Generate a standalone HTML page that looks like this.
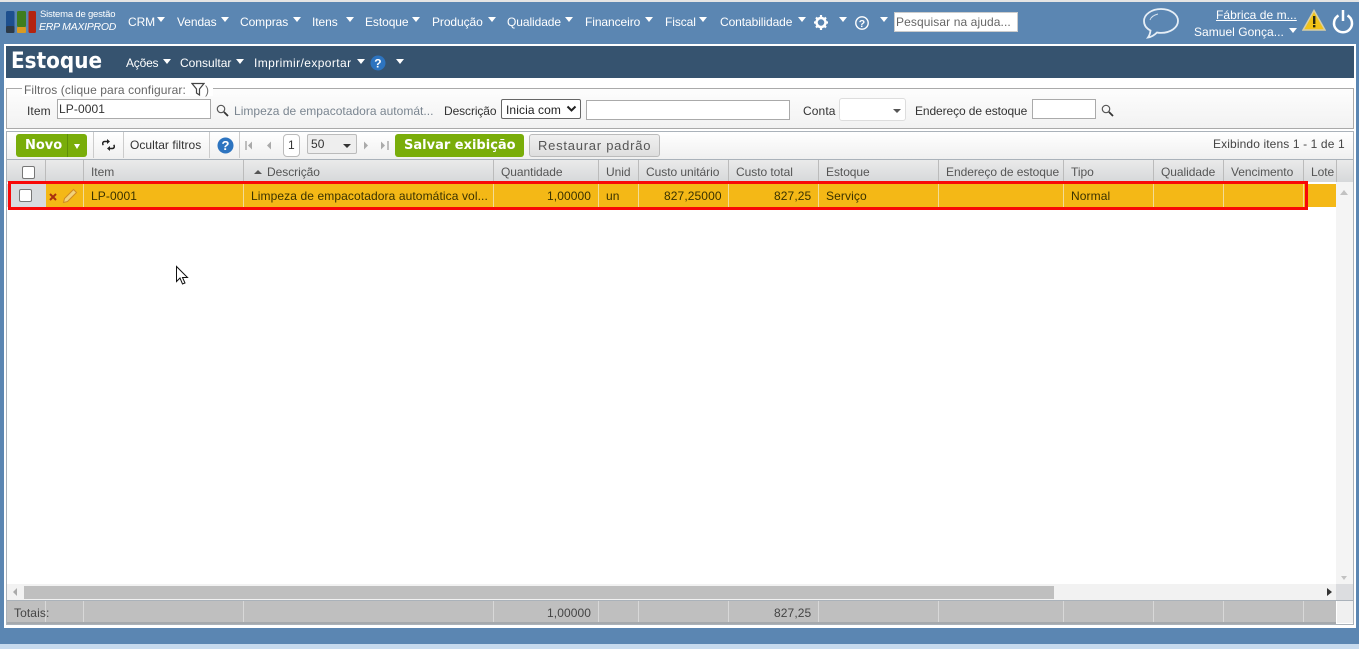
<!DOCTYPE html>
<html lang="pt"><head><meta charset="utf-8"><title>Estoque</title>
<style>
html,body{margin:0;padding:0}
body{width:1359px;height:649px;position:relative;overflow:hidden;background:#5b86b2;font:12px "Liberation Sans",sans-serif;letter-spacing:.1px;color:#333}
.a,.t,.m,.s,.hd,.cd{position:absolute}
.t,.m,.s,.hd,.cd{white-space:nowrap}
.m{color:#fff;top:15px;line-height:14px;font-size:12px;letter-spacing:-.08px}
.s{color:#fff;top:56px;line-height:14px}
.tri{position:absolute;width:0;height:0;border-left:4.5px solid transparent;border-right:4.5px solid transparent;border-top:5px solid #fff}
.hd{top:165px;line-height:14px;color:#555;letter-spacing:-.05px}
.cd{top:189px;line-height:14px;color:#3a3200;letter-spacing:.1px}
.v{position:absolute;width:1px}
.ib{position:absolute;background:#fff;border:1px solid #aaa;box-sizing:border-box}
.cb{position:absolute;width:13px;height:13px;box-sizing:border-box;border:1px solid #777;border-radius:2px;background:#fff}
</style></head><body>
<div class="a" style="left:0;top:0;width:1359px;height:2px;background:#e4e4e4"></div>
<div class="a" style="left:0;top:644px;width:1359px;height:5px;background:#c6daee"></div>

<!-- Logo -->
<svg class="a" style="left:5px;top:10px" width="31" height="24" viewBox="0 0 31 24"><rect x="1" y="1" width="8.500" height="22" rx="1.500" fill="#1d4f8e"/><rect x="1" y="16" width="8.500" height="7" rx="1.500" fill="#2c3a48"/><rect x="12" y="1" width="9" height="16" rx="1.500" fill="#3f7d1e"/><rect x="12" y="17" width="9" height="6" rx="1" fill="#d99a22"/><rect x="23.500" y="1" width="7.500" height="22" rx="1.500" fill="#b3230f"/></svg>
<div class="t" style="left:40px;top:9px;color:#fff;font-size:9.500px;line-height:12px;letter-spacing:-.2px">Sistema de gestão</div>
<div class="t" style="left:39px;top:21px;color:#fff;font-size:10.500px;line-height:13px;font-style:italic;letter-spacing:-.25px">ERP MAXIPROD</div>

<!-- Menu -->
<div class="m" style="left:128px">CRM</div><i class="tri" style="left:157px;top:17px"></i>
<div class="m" style="left:177px">Vendas</div><i class="tri" style="left:221px;top:17px"></i>
<div class="m" style="left:240px">Compras</div><i class="tri" style="left:293px;top:17px"></i>
<div class="m" style="left:312px">Itens</div><i class="tri" style="left:346px;top:17px"></i>
<div class="m" style="left:365px">Estoque</div><i class="tri" style="left:412px;top:17px"></i>
<div class="m" style="left:432px">Produção</div><i class="tri" style="left:488px;top:17px"></i>
<div class="m" style="left:507px">Qualidade</div><i class="tri" style="left:565px;top:17px"></i>
<div class="m" style="left:585px">Financeiro</div><i class="tri" style="left:645px;top:17px"></i>
<div class="m" style="left:665px">Fiscal</div><i class="tri" style="left:699px;top:17px"></i>
<div class="m" style="left:720px">Contabilidade</div><i class="tri" style="left:798px;top:17px"></i>
<svg class="a" style="left:813px;top:14px" width="16" height="17" viewBox="0 0 16 17"><circle cx="8" cy="8.500" r="4.500" fill="none" stroke="#fff" stroke-width="2.500"/><path d="M8 1v3M8 13v3M1 8.500h3M12 8.500h3M3 3.500l2 2M11 11.500l2 2M13 3.500l-2 2M5 11.500l-2 2" stroke="#fff" stroke-width="2.200"/></svg>
<i class="tri" style="left:839px;top:17px"></i>
<svg class="a" style="left:854px;top:15px" width="16" height="16" viewBox="0 0 16 16"><circle cx="8" cy="8" r="6.200" fill="none" stroke="#fff" stroke-width="1.400"/><text x="8" y="12" font-size="10.500" font-weight="bold" fill="#fff" text-anchor="middle" font-family="Liberation Sans">?</text></svg>
<i class="tri" style="left:880px;top:17px"></i>
<div class="a" style="left:894px;top:12px;width:124px;height:20px;background:#fff;border:1px solid #ccc;box-sizing:border-box"></div>
<div class="t" style="left:896px;top:15px;color:#666;line-height:14px">Pesquisar na ajuda...</div>

<svg class="a" style="left:1142px;top:7px" width="38" height="33" viewBox="0 0 38 33"><path d="M19 2C9.500 2 2 7.500 2 14c0 4 2.500 7.500 6.500 9.500-.3 2.500-1 5-2.500 7 3.500-.5 6.500-2.500 9-5 1.300.3 2.600.4 4 .4 9.500 0 17-5.400 17-12S28.500 2 19 2z" fill="none" stroke="#e6eef6" stroke-width="1.800"/><path d="M8 13c1-3 4-5 8-6" fill="none" stroke="#d5e2ee" stroke-width="1"/></svg>
<div class="t" style="left:1216px;top:8px;color:#fff;line-height:14px;text-decoration:underline;letter-spacing:.05px">Fábrica de m...</div>
<div class="t" style="left:1194px;top:25px;color:#fff;line-height:14px;letter-spacing:.03px">Samuel Gonça...</div><i class="tri" style="left:1289px;top:28px"></i>
<svg class="a" style="left:1302px;top:9px" width="24" height="22" viewBox="0 0 24 22"><path d="M12 1.500L23 21H1z" fill="#f2c418" stroke="#d8cfa8" stroke-width="1.500"/><rect x="11" y="7" width="2.400" height="8" fill="#2a2a10"/><rect x="11" y="16" width="2.400" height="2.400" fill="#2a2a10"/></svg>
<svg class="a" style="left:1331px;top:8px" width="24" height="26" viewBox="0 0 24 26"><path d="M7.500 7.500a9 9 0 1 0 9 0" fill="none" stroke="#fff" stroke-width="2.500"/><path d="M12 2v11" stroke="#fff" stroke-width="2.500"/></svg>

<!-- Panel -->
<div class="a" style="left:4px;top:44px;width:1352px;height:584px;background:#fff"></div>
<div class="a" style="left:6px;top:46px;width:1348px;height:32px;background:#36536f"></div>
<div class="t" style="left:11px;top:49px;color:#fff;font-size:22px;line-height:26px;font-weight:bold;letter-spacing:0;font-family:'DejaVu Sans',sans-serif;transform:scaleX(.91);transform-origin:left">Estoque</div>
<div class="s" style="left:126px;letter-spacing:-.2px">Ações</div><i class="tri" style="left:163px;top:59px"></i>
<div class="s" style="left:180px;letter-spacing:0">Consultar</div><i class="tri" style="left:236px;top:59px"></i>
<div class="s" style="left:254px;letter-spacing:.4px">Imprimir/exportar</div><i class="tri" style="left:357px;top:59px"></i>
<svg class="a" style="left:370px;top:55px" width="16" height="16" viewBox="0 0 16 16"><circle cx="8" cy="8" r="7.500" fill="#2d74c0"/><text x="8" y="12.500" font-size="12" font-weight="bold" fill="#fff" text-anchor="middle" font-family="Liberation Sans">?</text></svg>
<i class="tri" style="left:396px;top:59px"></i>

<!-- Filters -->
<div class="a" style="left:6px;top:88px;width:1348px;height:41px;box-sizing:border-box;border:1px solid #aaa;background:linear-gradient(#fdfdfd,#f2f2f2)"></div>
<div class="a" style="left:22px;top:82px;width:191px;height:14px;background:#fff"></div>
<div class="t" style="left:24px;top:83px;color:#666;line-height:14px">Filtros (clique para configurar:</div>
<svg class="a" style="left:191px;top:82px" width="14" height="14" viewBox="0 0 14 14"><path d="M1 1.500h12L8.500 7v6L5.500 11V7z" fill="none" stroke="#444" stroke-width="1.200"/></svg>
<div class="t" style="left:205px;top:83px;color:#666;line-height:14px">)</div>
<div class="t" style="left:27px;top:104px;line-height:14px">Item</div>
<div class="ib" style="left:57px;top:99px;width:154px;height:20px"></div>
<div class="t" style="left:59px;top:102px;line-height:14px">LP-0001</div>
<svg class="a" style="left:216px;top:104px" width="13" height="13" viewBox="0 0 13 13"><circle cx="5" cy="5" r="3.700" fill="none" stroke="#555" stroke-width="1.200"/><path d="M8 8l4 4" stroke="#333" stroke-width="1.800"/></svg>
<div class="t" style="left:234px;top:104px;color:#7a8590;line-height:14px;letter-spacing:.02px">Limpeza de empacotadora automát...</div>
<div class="t" style="left:444px;top:104px;line-height:14px;letter-spacing:-.1px">Descrição</div>
<div class="a" style="left:501px;top:99px;width:80px;height:20px;box-sizing:border-box;border:1px solid #666;border-radius:2px;background:#fff"></div>
<div class="t" style="left:506px;top:103px;line-height:14px;color:#222">Inicia com</div>
<svg class="a" style="left:566px;top:105px" width="11" height="8" viewBox="0 0 11 8"><path d="M1.500 1.500l4 4 4-4" fill="none" stroke="#222" stroke-width="2"/></svg>
<div class="ib" style="left:586px;top:100px;width:204px;height:20px"></div>
<div class="t" style="left:803px;top:104px;line-height:14px">Conta</div>
<div class="a" style="left:839px;top:98px;width:67px;height:23px;box-sizing:border-box;border:1px solid #ddd;border-radius:3px;background:#fff"></div>
<div class="a" style="left:893px;top:109px;width:0;height:0;border-left:4px solid transparent;border-right:4px solid transparent;border-top:4px solid #555"></div>
<div class="t" style="left:915px;top:104px;line-height:14px;letter-spacing:-.1px">Endereço de estoque</div>
<div class="ib" style="left:1032px;top:99px;width:64px;height:20px"></div>
<svg class="a" style="left:1101px;top:104px" width="13" height="13" viewBox="0 0 13 13"><circle cx="5" cy="5" r="3.700" fill="none" stroke="#555" stroke-width="1.200"/><path d="M8 8l4 4" stroke="#333" stroke-width="1.800"/></svg>

<!-- Grid frame -->
<div class="a" style="left:6px;top:131px;width:1348px;height:494px;box-sizing:border-box;border:1px solid #aab2ba;background:#fff"></div>
<!-- Toolbar -->
<div class="a" style="left:7px;top:132px;width:1346px;height:27px;background:linear-gradient(#fff,#f0f0f0)"></div>
<div class="a" style="left:16px;top:134px;width:71px;height:23px;border-radius:3px;background:#79ad0a"></div>
<div class="a" style="left:67px;top:134px;width:1px;height:23px;background:#5f8f08"></div>
<div class="t" style="left:25px;top:137px;color:#fff;font-size:13px;font-weight:bold;line-height:17px;font-family:'DejaVu Sans',sans-serif;letter-spacing:0">Novo</div>
<div class="a" style="left:74px;top:144px;width:0;height:0;border-left:3.500px solid transparent;border-right:3.500px solid transparent;border-top:5px solid #fff"></div>
<div class="v" style="left:93px;top:132px;height:26px;background:#ccc"></div>
<div class="v" style="left:123px;top:132px;height:26px;background:#ccc"></div>
<div class="v" style="left:209px;top:132px;height:26px;background:#ccc"></div>
<div class="v" style="left:239px;top:132px;height:26px;background:#ccc"></div>
<svg class="a" style="left:102px;top:139px" width="13" height="12" viewBox="0 0 13 12"><path d="M6 2.500H3a2 2 0 0 0-1.600 3.500M7 9.500h3a2 2 0 0 0 1.600-3.500" fill="none" stroke="#222" stroke-width="1.500"/><path d="M5 0v5l3-2.500zM8 7v5L5 9.500z" fill="#222"/></svg>
<div class="t" style="left:130px;top:138px;line-height:14px;color:#333;letter-spacing:.04px">Ocultar filtros</div>
<svg class="a" style="left:217px;top:137px" width="17" height="17" viewBox="0 0 17 17"><circle cx="8.500" cy="8.500" r="8" fill="#2d74c0"/><text x="8.500" y="13" font-size="13" font-weight="bold" fill="#fff" text-anchor="middle" font-family="Liberation Sans">?</text></svg>
<svg class="a" style="left:245px;top:140px" width="30" height="11" viewBox="0 0 30 11"><path d="M1 1v9" stroke="#aaa" stroke-width="1.500"/><path d="M7 1.500L3 5.500l4 4zM26 1.500l-4 4 4 4z" fill="#aaa"/></svg>
<div class="a" style="left:283px;top:134px;width:17px;height:23px;box-sizing:border-box;border:1px solid #bbb;border-radius:4px;background:#fff"></div>
<div class="t" style="left:288px;top:138px;line-height:14px;letter-spacing:0">1</div>
<div class="a" style="left:307px;top:134px;width:50px;height:20px;box-sizing:border-box;border:1px solid #bbb;border-radius:2px;background:#eee"></div>
<div class="t" style="left:311px;top:137px;line-height:14px">50</div>
<div class="a" style="left:343px;top:144px;width:0;height:0;border-left:4.500px solid transparent;border-right:4.500px solid transparent;border-top:4.500px solid #333"></div>
<svg class="a" style="left:362px;top:140px" width="28" height="11" viewBox="0 0 28 11"><path d="M2 1.500l4 4-4 4zM19 1.500l4 4-4 4z" fill="#aaa"/><path d="M26 1v9" stroke="#aaa" stroke-width="1.500"/></svg>
<div class="a" style="left:395px;top:134px;width:129px;height:23px;border-radius:3px;background:#79ad0a"></div>
<div class="t" style="left:404px;top:137px;color:#fff;font-size:13px;font-weight:bold;line-height:17px;font-family:'DejaVu Sans',sans-serif;letter-spacing:0">Salvar exibição</div>
<div class="a" style="left:529px;top:134px;width:131px;height:23px;box-sizing:border-box;border:1px solid #bbb;border-radius:3px;background:linear-gradient(#f0f0f0,#dedede)"></div>
<div class="t" style="left:538px;top:137px;font-size:13px;line-height:17px;letter-spacing:.75px;color:#555">Restaurar padrão</div>
<div class="t" style="left:1213px;top:137px;line-height:14px;letter-spacing:.12px;color:#444">Exibindo itens 1 - 1 de 1</div>

<!-- Header -->
<div class="a" style="left:7px;top:159px;width:1346px;height:1px;background:#aab2ba"></div>
<div class="a" style="left:7px;top:160px;width:1346px;height:22px;background:linear-gradient(#eaeaea,#d6d8da)"></div>
<div class="cb" style="left:22px;top:166px"></div>
<div class="v" style="left:45px;top:160px;height:22px;background:#bbb"></div>
<div class="v" style="left:83px;top:160px;height:22px;background:#bbb"></div>
<div class="v" style="left:243px;top:160px;height:22px;background:#bbb"></div>
<div class="v" style="left:493px;top:160px;height:22px;background:#bbb"></div>
<div class="v" style="left:598px;top:160px;height:22px;background:#bbb"></div>
<div class="v" style="left:638px;top:160px;height:22px;background:#bbb"></div>
<div class="v" style="left:728px;top:160px;height:22px;background:#bbb"></div>
<div class="v" style="left:818px;top:160px;height:22px;background:#bbb"></div>
<div class="v" style="left:938px;top:160px;height:22px;background:#bbb"></div>
<div class="v" style="left:1063px;top:160px;height:22px;background:#bbb"></div>
<div class="v" style="left:1153px;top:160px;height:22px;background:#bbb"></div>
<div class="v" style="left:1223px;top:160px;height:22px;background:#bbb"></div>
<div class="v" style="left:1303px;top:160px;height:22px;background:#bbb"></div>
<div class="v" style="left:1336px;top:160px;height:22px;background:#bbb"></div>
<div class="hd" style="left:91px">Item</div>
<div class="a" style="left:254px;top:170px;width:0;height:0;border-left:4px solid transparent;border-right:4px solid transparent;border-bottom:4px solid #555"></div>
<div class="hd" style="left:267px">Descrição</div>
<div class="hd" style="left:501px">Quantidade</div>
<div class="hd" style="left:606px">Unid</div>
<div class="hd" style="left:646px">Custo unitário</div>
<div class="hd" style="left:736px">Custo total</div>
<div class="hd" style="left:826px">Estoque</div>
<div class="hd" style="left:946px">Endereço de estoque</div>
<div class="hd" style="left:1071px">Tipo</div>
<div class="hd" style="left:1161px">Qualidade</div>
<div class="hd" style="left:1231px">Vencimento</div>
<div class="hd" style="left:1311px">Lote</div>

<!-- Row -->
<div class="a" style="left:7px;top:184px;width:39px;height:23px;background:#d8dbde"></div>
<div class="a" style="left:46px;top:184px;width:1290px;height:23px;background:#f4b816"></div>
<div class="cb" style="left:19px;top:189px"></div>
<div class="v" style="left:83px;top:184px;height:23px;background:#f3dc95"></div>
<div class="v" style="left:243px;top:184px;height:23px;background:#f3dc95"></div>
<div class="v" style="left:493px;top:184px;height:23px;background:#f3dc95"></div>
<div class="v" style="left:598px;top:184px;height:23px;background:#f3dc95"></div>
<div class="v" style="left:638px;top:184px;height:23px;background:#f3dc95"></div>
<div class="v" style="left:728px;top:184px;height:23px;background:#f3dc95"></div>
<div class="v" style="left:818px;top:184px;height:23px;background:#f3dc95"></div>
<div class="v" style="left:938px;top:184px;height:23px;background:#f3dc95"></div>
<div class="v" style="left:1063px;top:184px;height:23px;background:#f3dc95"></div>
<div class="v" style="left:1153px;top:184px;height:23px;background:#f3dc95"></div>
<div class="v" style="left:1223px;top:184px;height:23px;background:#f3dc95"></div>
<div class="v" style="left:1303px;top:184px;height:23px;background:#f3dc95"></div>
<svg class="a" style="left:49px;top:193px" width="8" height="8" viewBox="0 0 8 8"><path d="M1 1l6 6M7 1L1 7" stroke="#a8300f" stroke-width="2"/></svg>
<svg class="a" style="left:62px;top:188px" width="16" height="16" viewBox="0 0 16 16"><path d="M1.500 14.500l1-4L11.500 1.500l3 3-9 9z" fill="#f2d27a" stroke="#cf8a25" stroke-width="1"/></svg>
<div class="cd" style="left:91px">LP-0001</div>
<div class="cd" style="left:251px">Limpeza de empacotadora automática vol...</div>
<div class="cd" style="left:547px">1,00000</div>
<div class="cd" style="left:606px">un</div>
<div class="cd" style="left:664px">827,25000</div>
<div class="cd" style="left:774px">827,25</div>
<div class="cd" style="left:826px">Serviço</div>
<div class="cd" style="left:1071px">Normal</div>
<!-- Red highlight -->
<div class="a" style="left:8px;top:181px;width:1300px;height:29px;box-sizing:border-box;border:3px solid #f80808"></div>

<!-- Cursor -->
<svg class="a" style="left:175px;top:265px" width="15" height="21" viewBox="0 0 15 21"><path d="M1.500 1.500v15l3.500-3.500 2.500 6 2.500-1-2.500-5.500h5z" fill="#fff" stroke="#111" stroke-width="1"/></svg>

<!-- Vertical scrollbar -->
<div class="a" style="left:1336px;top:182px;width:17px;height:403px;background:#f4f4f4"></div>
<div class="a" style="left:1340px;top:190px;width:0;height:0;border-left:4px solid transparent;border-right:4px solid transparent;border-bottom:5px solid #c2c2c2"></div>
<div class="a" style="left:1341px;top:576px;width:0;height:0;border-left:3.500px solid transparent;border-right:3.500px solid transparent;border-top:4px solid #c2c2c2"></div>

<!-- Horizontal scrollbar -->
<div class="a" style="left:7px;top:584px;width:1329px;height:16px;background:#f2f2f2"></div>
<div class="a" style="left:1336px;top:584px;width:17px;height:16px;background:#dcdde0"></div>
<div class="a" style="left:24px;top:586px;width:1030px;height:13px;background:#bfbfbf"></div>
<div class="a" style="left:13px;top:588px;width:0;height:0;border-top:4px solid transparent;border-bottom:4px solid transparent;border-right:4px solid #aaa"></div>
<div class="a" style="left:1327px;top:588px;width:0;height:0;border-top:4px solid transparent;border-bottom:4px solid transparent;border-left:5px solid #333"></div>

<!-- Totals -->
<div class="a" style="left:7px;top:601px;width:1329px;height:23px;background:#bfbfbf;border-bottom:2px solid #a5a9ad;box-sizing:border-box"></div>
<div class="a" style="left:7px;top:600px;width:1346px;height:1px;background:#aab2ba"></div>
<div class="a" style="left:1337px;top:601px;width:16px;height:22px;background:#f0f0f0"></div>
<div class="v" style="left:45px;top:601px;height:21px;background:#d8d8d8"></div>
<div class="v" style="left:83px;top:601px;height:21px;background:#d8d8d8"></div>
<div class="v" style="left:243px;top:601px;height:21px;background:#d8d8d8"></div>
<div class="v" style="left:493px;top:601px;height:21px;background:#d8d8d8"></div>
<div class="v" style="left:598px;top:601px;height:21px;background:#d8d8d8"></div>
<div class="v" style="left:638px;top:601px;height:21px;background:#d8d8d8"></div>
<div class="v" style="left:728px;top:601px;height:21px;background:#d8d8d8"></div>
<div class="v" style="left:818px;top:601px;height:21px;background:#d8d8d8"></div>
<div class="v" style="left:938px;top:601px;height:21px;background:#d8d8d8"></div>
<div class="v" style="left:1063px;top:601px;height:21px;background:#d8d8d8"></div>
<div class="v" style="left:1153px;top:601px;height:21px;background:#d8d8d8"></div>
<div class="v" style="left:1223px;top:601px;height:21px;background:#d8d8d8"></div>
<div class="v" style="left:1303px;top:601px;height:21px;background:#d8d8d8"></div>
<div class="t" style="left:14px;top:606px;line-height:14px;color:#444">Totais:</div>
<div class="t" style="left:547px;top:606px;line-height:14px;color:#444">1,00000</div>
<div class="t" style="left:774px;top:606px;line-height:14px;color:#444">827,25</div>
</body></html>
